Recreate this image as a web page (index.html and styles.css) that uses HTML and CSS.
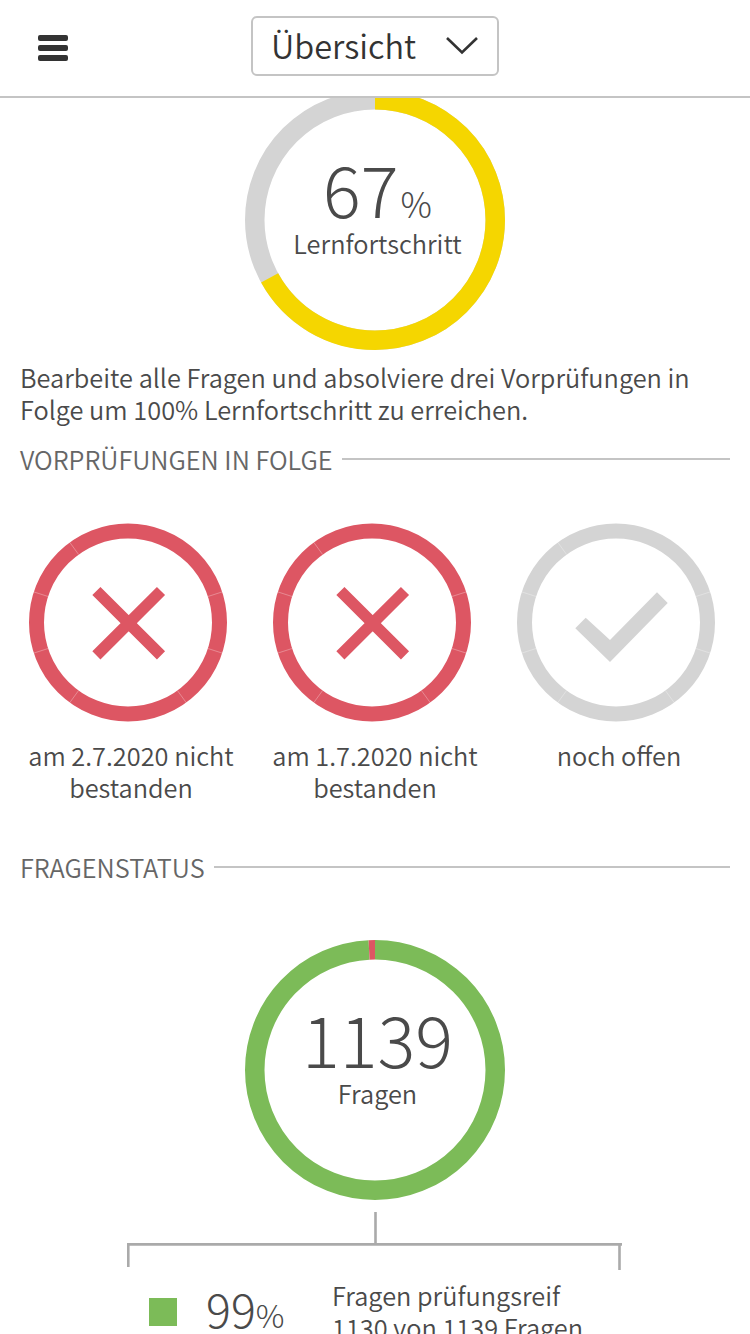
FILE: index.html
```html
<!DOCTYPE html>
<html lang="de">
<head>
    <meta charset="UTF-8">
    <meta name="viewport" content="width=device-width, initial-scale=1.0">
    <title>Übersicht</title>
    <link rel="stylesheet" href="styles.css">
</head>
<body>
    <!-- Kopfzeile -->
    <header class="header">
        <div class="menu">
            <span></span>
            <span></span>
            <span></span>
        </div>
        <div class="dropdown">
            <span class="dropdown-label">Übersicht</span>
            <svg class="chevron" width="34" height="20" viewBox="0 0 34 20">
                <path d="M2 2 L17 16.5 L32 2" fill="none" stroke="#333" stroke-width="2.6"/>
            </svg>
        </div>
    </header>

    <main class="content">
        <!-- Lernfortschritt -->
        <div class="ring progress">
            <svg width="260" height="260" viewBox="0 0 260 260">
                <circle cx="130" cy="130" r="120.25" fill="none" stroke="#d4d4d4" stroke-width="19.5"/>
                <circle cx="130" cy="130" r="120.25" fill="none" stroke="#f5d600" stroke-width="19.5" pathLength="100" stroke-dasharray="67 33" transform="rotate(-90 130 130)"/>
            </svg>
            <div class="ring-text">
                <div class="number">67<span class="percent">%</span></div>
                <div class="caption">Lernfortschritt</div>
            </div>
        </div>

        <p class="info">Bearbeite alle Fragen und absolviere drei Vorprüfungen in Folge um 100% Lernfortschritt zu erreichen.</p>

        <!-- Vorprüfungen -->
        <h2 class="title">VORPRÜFUNGEN IN FOLGE</h2>
        <div class="exams">
            <div class="exam">
                <svg width="204" height="204" viewBox="26 520 204 204">
                    <circle cx="128" cy="622.5" r="91.5" fill="none" stroke="#dd5663" stroke-width="15"/>
                    <use href="#gaps"/>
                    <path d="M96.4 591 L161 655.3 M161 591 L96.4 655.3" stroke="#dd5663" stroke-width="11.5"/>
                </svg>
                <p class="exam-text">am 2.7.2020 nicht bestanden</p>
            </div>
            <div class="exam">
                <svg width="204" height="204" viewBox="26 520 204 204">
                    <circle cx="128" cy="622.5" r="91.5" fill="none" stroke="#dd5663" stroke-width="15"/>
                    <use href="#gaps"/>
                    <path d="M96.4 591 L161 655.3 M161 591 L96.4 655.3" stroke="#dd5663" stroke-width="11.5"/>
                </svg>
                <p class="exam-text">am 1.7.2020 nicht bestanden</p>
            </div>
            <div class="exam">
                <svg width="204" height="204" viewBox="26 520 204 204">
                    <defs>
                        <path id="gaps" d="M207.9 596.5 L222.2 591.9 M207.9 648.5 L222.2 653.1 M177.4 690.5 L186.2 702.6 M78.6 690.5 L69.8 702.6 M48.1 648.5 L33.8 653.1 M48.1 596.5 L33.8 591.9 M78.6 554.5 L69.8 542.4" stroke="#fff" stroke-width="0.5" stroke-opacity="0.6"/>
                    </defs>
                    <circle cx="128" cy="622.5" r="91.5" fill="none" stroke="#d4d4d4" stroke-width="15"/>
                    <use href="#gaps"/>
                    <path d="M87.3 628.3 L97.7 617.7 L122 640 L169 592.3 L179.7 603 L122 662 Z" fill="#d4d4d4"/>
                </svg>
                <p class="exam-text">noch offen</p>
            </div>
        </div>

        <!-- Fragenstatus -->
        <h2 class="title">FRAGENSTATUS</h2>
        <div class="ring questions">
            <svg width="260" height="260" viewBox="0 0 260 260">
                <circle cx="130" cy="130" r="120.25" fill="none" stroke="#7cbb58" stroke-width="19.5" pathLength="1139" stroke-dasharray="1130 9" transform="rotate(-90 130 130)"/>
                <circle cx="130" cy="130" r="120.25" fill="none" stroke="#dd5663" stroke-width="19.5" pathLength="1139" stroke-dasharray="0 1130 9 0" transform="rotate(-90 130 130)"/>
            </svg>
            <div class="ring-text">
                <div class="number">1139</div>
                <div class="caption">Fragen</div>
            </div>
        </div>
        <svg class="tree" width="496" height="58" viewBox="0 0 496 58">
            <path d="M248.5 0 V32 M0 32.4 H495 M1.3 32 V55 M492.5 32 V58" fill="none" stroke="#aaa" stroke-width="2.6"/>
        </svg>
        <div class="status">
            <div class="square"></div>
            <div class="status-number">99<span class="status-percent">%</span></div>
            <div class="status-text">Fragen prüfungsreif<br>1130 von 1139 Fragen</div>
        </div>
    </main>
</body>
</html>
```
FILE: styles.css
```css
* {
    box-sizing: border-box;
}
body {
    margin: 0;
    height: 1334px;
    overflow: hidden;
    background-color: #fff;
    color: #4a4a4a;
    font-family: "Noto Sans CJK SC", "Noto Sans", sans-serif;
    font-size: 25.35px;
    font-weight: 350;
    line-height: 32px;
}
.header {
    position: relative;
    z-index: 1;
    display: flex;
    height: 98px;
    padding: 16px 38px;
    background-color: #fff;
    border-bottom: 2px solid #c4c4c4;
}
.menu {
    display: flex;
    flex-direction: column;
    gap: 4px;
    width: 30px;
    margin-top: 19px;
}
.menu span {
    height: 6px;
    border-radius: 2px;
    background-color: #333;
}
.dropdown {
    display: flex;
    align-items: center;
    justify-content: space-between;
    width: 248px;
    height: 60px;
    margin-left: 183px;
    padding: 0 18px;
    border: 2px solid #c4c4c4;
    border-radius: 6px;
    color: #333;
}
.dropdown-label {
    padding-bottom: 3px;
    font-size: 32.5px;
}
.content {
    margin-top: -8px;
}
.ring {
    display: grid;
    width: 260px;
    height: 260px;
    margin: 0 auto;
}
.ring svg, .ring-text {
    grid-area: 1 / 1;
}
.ring-text {
    padding: 62px 0 0 5px;
    text-align: center;
}
.number {
    font-size: 70.5px;
    font-weight: 200;
    line-height: 70px;
}
.percent {
    margin-left: 2px;
    font-size: 35px;
    line-height: 0;
}
.caption {
    margin-top: 5px;
}
.info {
    margin: 11px 20px 0;
}
.title {
    display: flex;
    align-items: center;
    gap: 9px;
    margin: 18px 20px 0;
    color: #666;
    font-size: 25.3px;
    font-weight: 350;
}
.title::after {
    content: "";
    flex: 1;
    height: 2px;
    background-color: #c4c4c4;
}
.exams {
    display: grid;
    grid-template-columns: repeat(3, 244px);
    margin: 45px 0 0 9px;
    height: 313px;
}
.exam {
    text-align: center;
}
.exam svg {
    display: block;
    margin-left: 17px;
}
.exam-text {
    margin: 15px 15px 0;
}
.questions {
    margin-top: 57px;
}
.tree {
    display: block;
    margin: 12px 0 0 127px;
}
.status {
    display: flex;
    margin: 9px 0 0 149px;
}
.square {
    width: 28px;
    height: 28px;
    margin-top: 19px;
    background-color: #7cbb58;
}
.status-number {
    width: 155px;
    padding: 6px 0 0 29px;
    font-size: 46.5px;
    font-weight: 200;
    line-height: 46px;
}
.status-percent {
    font-size: 32px;
    line-height: 0;
}
```
